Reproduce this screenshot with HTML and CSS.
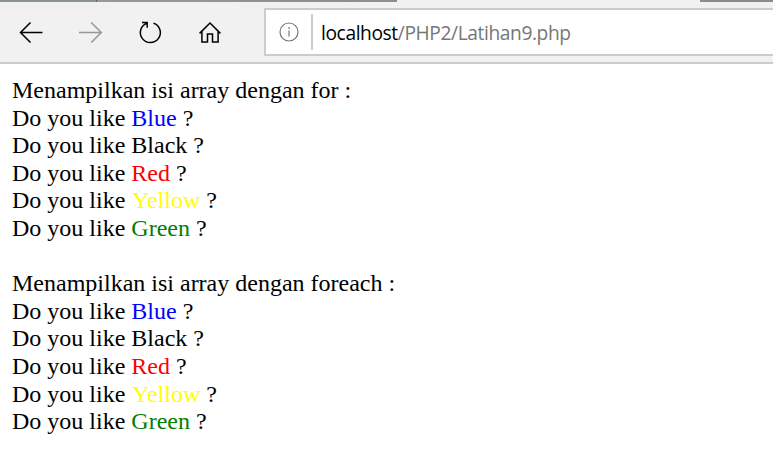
FILE: index.html
```html
<!DOCTYPE html>
<html lang="id">
<head>
<meta charset="utf-8">
<title>localhost</title>
<link rel="stylesheet" href="styles.css">
</head>
<body>
<div class="tabs"><div class="tab-first"></div><div class="tab-second"></div><div class="tab-active"></div><div class="tab-rest"></div></div>
<header class="toolbar">
  <nav class="nav">
    <svg class="icon" viewBox="0 0 24 24"><path d="M24.5 12.5H2.5M12.5 2.5l-10 10 10 10"/></svg>
    <svg class="icon disabled" viewBox="0 0 24 24"><path d="M1 12.5h22M13.3 2.5l10 10-10 10"/></svg>
    <svg class="icon" viewBox="0 0 24 24"><path d="M15.5 3.1A10 10 0 1 1 8.9 3.2M4 2.6h5.2v5.2"/></svg>
    <svg class="icon" viewBox="0 0 24 24"><path d="M1.6 13.4L12 3l10.4 10.4M3.9 11.4v10.5h5.6v-8h5v8h5.6V11.4"/></svg>
  </nav>
  <div class="address">
    <svg class="info" viewBox="0 0 20 20"><circle cx="10" cy="10" r="9"/><path d="M10 8.5v6M10 5v2"/></svg>
    <span class="divider"></span>
    <span class="url"><b>localhost</b>/PHP2/Latihan9.php</span>
  </div>
</header>
<main class="content">
  <div>Menampilkan isi array dengan for :</div>
  <div>Do you like <span class="blue">Blue</span> ?</div>
  <div>Do you like Black ?</div>
  <div>Do you like <span class="red">Red</span> ?</div>
  <div>Do you like <span class="yellow">Yellow</span> ?</div>
  <div>Do you like <span class="green">Green</span> ?</div>
  <br>
  <div>Menampilkan isi array dengan foreach :</div>
  <div>Do you like <span class="blue">Blue</span> ?</div>
  <div>Do you like Black ?</div>
  <div>Do you like <span class="red">Red</span> ?</div>
  <div>Do you like <span class="yellow">Yellow</span> ?</div>
  <div>Do you like <span class="green">Green</span> ?</div>
</main>
</body>
</html>
```
FILE: styles.css
```css
* { box-sizing: border-box; }
body { margin: 0; background: #fff; overflow: hidden; }
.tabs { display: flex; height: 2px; }
.tab-first { width: 97px; background: #8b9592; border-right: 1px solid #5c6462; }
.tab-second { width: 300px; background: linear-gradient(90deg, #929a9a, #8e8c8c); }
.tab-active { width: 303px; background: #f1f1f1; }
.tab-rest { flex: 1; background: #8c8c8c; }
.toolbar { display: flex; height: 62px; padding-top: 6px; background: #f1f1f1; border-bottom: 2px solid #ccc; }
.nav { display: flex; gap: 36px; width: 264px; padding: 12px 0 0 18px; }
.icon { width: 24px; height: 24px; overflow: visible; fill: none; stroke: #000; stroke-width: 1.5; }
.disabled { stroke: #969696; }
.address { display: flex; align-items: center; flex: 1; height: 48px; border: 2px solid #ccc; border-right: 0; background: #fff; }
.info { width: 20px; height: 20px; margin-left: 13px; fill: none; stroke: #767676; stroke-width: 1.2; }
.divider { width: 2px; height: 36px; margin: 0 8px 0 12px; background: #ccc; }
.url { font: 19.2px "Open Sans", "Noto Sans", sans-serif; letter-spacing: -0.4px; color: #767676; white-space: nowrap; }
.url b { font-weight: 400; color: #000; }
.content { padding: 13px 12px; font: 24px/27.6px "Liberation Serif", serif; color: #000; }
.blue { color: #00f; }
.red { color: #f00; }
.yellow { margin-left: 0.7px; color: #ff0; }
.green { color: #008000; }
```
